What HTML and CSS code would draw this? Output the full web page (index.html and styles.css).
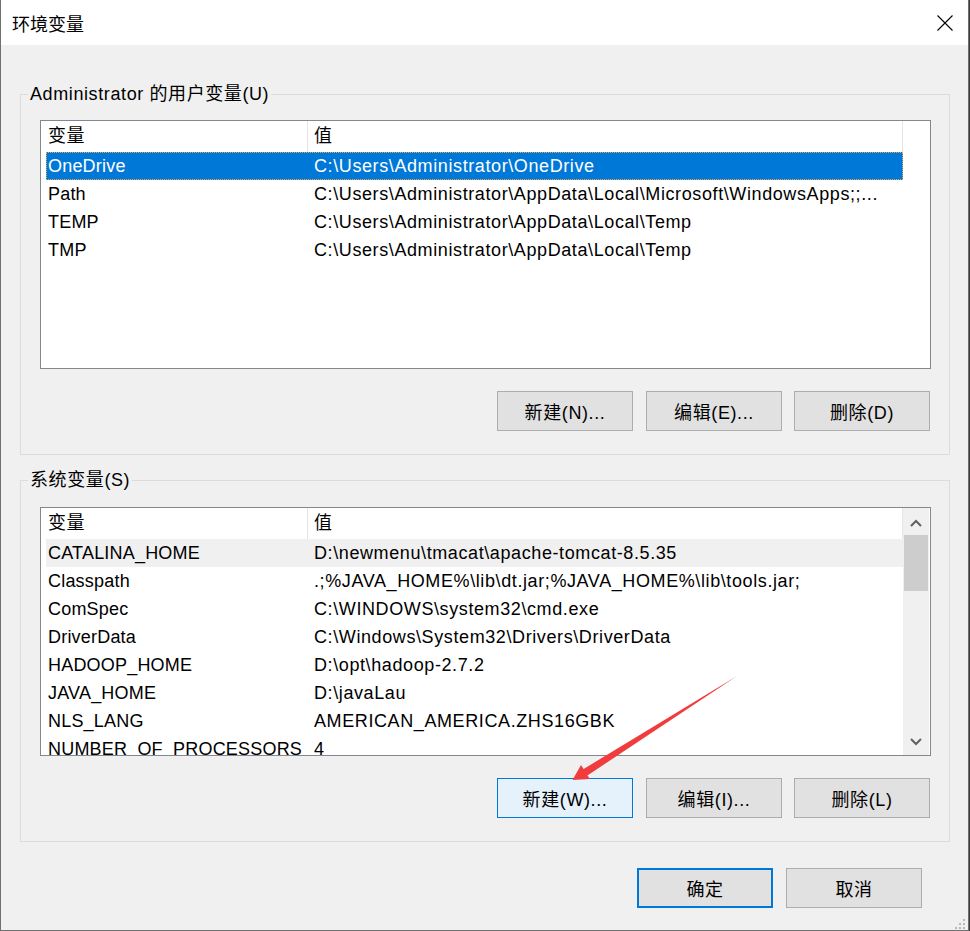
FILE: index.html
```html
<!DOCTYPE html>
<html>
  <head>
    <meta charset="UTF-8">
    <title>环境变量</title>
    <link rel="stylesheet" href="styles.css">
  </head>
  <body>
    <div class="window">
      <div class="titlebar">
        <div class="title">环境变量</div>
        <div class="close">
          <svg width="16" height="16" viewBox="0 0 16 16"><path d="M0.5 0.5 L15.5 15.5 M15.5 0.5 L0.5 15.5" stroke="#000" stroke-width="1.1" fill="none"/></svg>
        </div>
      </div>
      <div class="content">
        <fieldset class="group">
          <legend>Administrator 的用户变量(U)</legend>
          <div class="list">
            <div class="list-main">
              <div class="list-head"><div class="name">变量</div><div class="value">值</div></div>
              <div class="list-rows">
                <div class="row selected"><div class="name">OneDrive</div><div class="value">C:\Users\Administrator\OneDrive</div></div>
                <div class="row"><div class="name">Path</div><div class="value">C:\Users\Administrator\AppData\Local\Microsoft\WindowsApps;;...</div></div>
                <div class="row"><div class="name">TEMP</div><div class="value">C:\Users\Administrator\AppData\Local\Temp</div></div>
                <div class="row"><div class="name">TMP</div><div class="value">C:\Users\Administrator\AppData\Local\Temp</div></div>
              </div>
            </div>
          </div>
          <div class="actions">
            <button class="btn">新建(N)...</button>
            <button class="btn">编辑(E)...</button>
            <button class="btn">删除(D)</button>
          </div>
        </fieldset>

        <fieldset class="group system">
          <legend>系统变量(S)</legend>
          <div class="list">
            <div class="list-main">
              <div class="list-head"><div class="name">变量</div><div class="value">值</div></div>
              <div class="list-rows">
                <div class="row current"><div class="name">CATALINA_HOME</div><div class="value">D:\newmenu\tmacat\apache-tomcat-8.5.35</div></div>
                <div class="row"><div class="name">Classpath</div><div class="value">.;%JAVA_HOME%\lib\dt.jar;%JAVA_HOME%\lib\tools.jar;</div></div>
                <div class="row"><div class="name">ComSpec</div><div class="value">C:\WINDOWS\system32\cmd.exe</div></div>
                <div class="row"><div class="name">DriverData</div><div class="value">C:\Windows\System32\Drivers\DriverData</div></div>
                <div class="row"><div class="name">HADOOP_HOME</div><div class="value">D:\opt\hadoop-2.7.2</div></div>
                <div class="row"><div class="name">JAVA_HOME</div><div class="value">D:\javaLau</div></div>
                <div class="row"><div class="name">NLS_LANG</div><div class="value">AMERICAN_AMERICA.ZHS16GBK</div></div>
                <div class="row"><div class="name">NUMBER_OF_PROCESSORS</div><div class="value">4</div></div>
              </div>
            </div>
            <div class="scrollbar">
              <div class="scroll-btn up">
                <svg width="12" height="8" viewBox="0 0 12 8"><polyline points="1,7 6,2 11,7" fill="none" stroke="#606060" stroke-width="2"/></svg>
              </div>
              <div class="scroll-thumb"></div>
              <div class="scroll-track"></div>
              <div class="scroll-btn">
                <svg width="12" height="8" viewBox="0 0 12 8"><polyline points="1,1 6,6 11,1" fill="none" stroke="#606060" stroke-width="2"/></svg>
              </div>
            </div>
          </div>
          <div class="actions">
            <button class="btn hot">新建(W)...</button>
            <button class="btn">编辑(I)...</button>
            <button class="btn">删除(L)</button>
          </div>
        </fieldset>

        <div class="dialog-actions">
          <button class="btn default">确定</button>
          <button class="btn">取消</button>
        </div>
      </div>

      <svg class="arrow" width="190" height="125" viewBox="0 0 190 125">
        <polygon points="12.5,115 21,100 23.6,104 177,11 27.4,110.5 30,114" fill="#f03c3c"/>
      </svg>
      <svg class="grip" width="12" height="12" viewBox="0 0 12 12" fill="#b9b9b9">
        <rect x="9" y="2" width="2" height="2"/>
        <rect x="5" y="6" width="2" height="2"/><rect x="9" y="6" width="2" height="2"/>
        <rect x="1" y="10" width="2" height="2"/><rect x="5" y="10" width="2" height="2"/><rect x="9" y="10" width="2" height="2"/>
      </svg>
    </div>
  </body>
</html>
```

FILE: styles.css
```css
* { box-sizing: border-box }
html { background: #3b3b3b }
body { color: #000; font-family: "Liberation Sans", "Noto Sans CJK SC", sans-serif; font-size: 18px; letter-spacing: 0.6px; margin: 0 }
button { color: #000; font: inherit; letter-spacing: inherit }

.window { background: #f0f0f0; border: 1px solid #6f6f6f; border-top: 0; height: 931px; position: relative; width: 969px }
.titlebar { align-items: center; background: #fff; display: flex; height: 45px; justify-content: space-between }
.title { letter-spacing: 0; padding-left: 11px }
.close { align-items: center; display: flex; height: 45px; justify-content: center; width: 46px }
.content { padding: 37px 18px 0 19px }

.group { border: 1px solid #dcdcdc; margin: 0; min-width: 0; padding: 14px 18px 23px 7px }
.group.system { margin-top: 13px; padding-top: 15px }
legend { line-height: 24px; padding: 0 2px }

.list { background: #fff; border: 1px solid #828790; display: flex; height: 249px; margin-left: 12px; overflow: hidden }
.list-main { flex: none; width: 862px }
.list-head { display: flex; height: 31px; line-height: 31px }
.list-head .name { border-right: 1px solid #e5e5e5; padding-left: 7px; width: 267px }
.list-head .value { border-right: 1px solid #e5e5e5; padding-left: 6px; width: 595px }
.list-rows { padding-left: 5px }
.row { display: flex; height: 28px; line-height: 28px; white-space: nowrap }
.row .name { flex: none; letter-spacing: 0.2px; overflow: hidden; padding-left: 2px; width: 261px }
.row .value { flex: 1; overflow: hidden; padding-left: 7px }
.row.selected { background: #0078d7; color: #fff; outline: 1px dotted #f2a94e; outline-offset: -1px }
.row.current { background: #f0f0f0 }

.scrollbar { background: #f0f0f0; display: flex; flex: none; flex-direction: column; width: 26px }
.scroll-btn { align-items: center; display: flex; flex: none; height: 27px; justify-content: center }
.scroll-btn.up { padding-top: 3px }
.scroll-thumb { background: #cdcdcd; flex: none; height: 56px; margin: 0 1px }
.scroll-track { flex: 1 }

.actions { display: flex; gap: 12px; justify-content: flex-end; margin-right: 1px; margin-top: 22px }
.actions .btn:first-child { margin-right: 1px }
.btn { background: #e1e1e1; border: 1px solid #adadad; height: 40px; padding: 0; width: 136px }
.btn.hot { background: #e5f1fb; border-color: #0078d7 }
.btn.default { border: 2px solid #0078d7 }
.dialog-actions { display: flex; gap: 13px; justify-content: flex-end; margin-top: 26px; padding-right: 28px }

.arrow { left: 559px; position: absolute; top: 665px }
.grip { bottom: 1px; position: absolute; right: 2px }
```
